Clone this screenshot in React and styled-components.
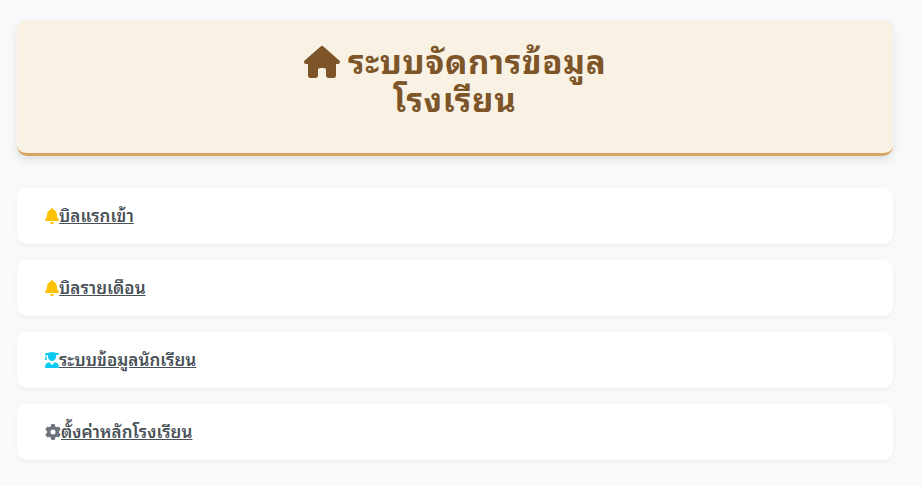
import React from 'react';
import styled, { createGlobalStyle } from 'styled-components';
import { FaHouse, FaBell, FaUserGraduate, FaGear } from 'react-icons/fa6';

const GlobalStyle = createGlobalStyle`
    * { box-sizing: border-box; }

    body {
        margin: 0;
        background-color: #f8f9fb;
        font-family: "Leelawadee UI", "Noto Sans Thai Looped", "Noto Looped Thai", "Loma", "Waree", "Garuda", "Liberation Sans", sans-serif;
    }
`;

const Page = styled.main`
    min-height: 486px;
    padding: 20px 29px 0 17px;
`;

const Header = styled.header`
    display: flex;
    justify-content: center;
    height: 136px;
    margin-bottom: 32px;
    padding-top: 21px;
    border-bottom: 3px solid #d6a562;
    border-radius: 10px;
    background-color: #f8f1e4;
    box-shadow: 0 4px 8px rgba(0, 0, 0, 0.1);
`;

const Title = styled.h1`
    margin: 0;
    color: #7d5528;
    font-size: 33px;
    font-weight: 700;
    letter-spacing: 0.7px;
    line-height: 38px;
    text-align: center;

    svg {
        width: 36px;
        height: 32px;
        margin-right: -1px;
        vertical-align: -4px;
    }
`;

const Menu = styled.nav`
    display: flex;
    flex-direction: column;
    gap: 16px;
`;

const MenuCard = styled.div`
    display: flex;
    align-items: center;
    height: 56px;
    padding: 0 28px;
    border-radius: 10px;
    background-color: white;
    box-shadow: 0 2px 5px rgba(0, 0, 0, 0.05);
    color: ${props => props.$color};

    svg {
        width: ${props => props.$iconWidth};
        height: 16px;
    }
`;

const MenuLink = styled.a`
    padding-bottom: 4px;
    color: #495057;
    font-size: 17px;
    font-weight: 600;
    letter-spacing: 0.05px;
    text-decoration: underline;
`;

const menus = [
    { label: 'บิลแรกเข้า', icon: FaBell, color: '#ffc107', iconWidth: '14px' },
    { label: 'บิลรายเดือน', icon: FaBell, color: '#ffc107', iconWidth: '14px' },
    { label: 'ระบบข้อมูลนักเรียน', icon: FaUserGraduate, color: '#0dcaf0', iconWidth: '14px' },
    { label: 'ตั้งค่าหลักโรงเรียน', icon: FaGear, color: '#6c757d', iconWidth: '16px' },
];

const App = () => {
    return (
        <>
            <GlobalStyle />
            <Page>
                <Header>
                    <Title>
                        <FaHouse /> ระบบจัดการข้อมูล<br />โรงเรียน
                    </Title>
                </Header>
                <Menu>
                    {menus.map(({ label, icon: Icon, color, iconWidth }) => (
                        <MenuCard key={label} $color={color} $iconWidth={iconWidth}>
                            <Icon />
                            <MenuLink href="#">{label}</MenuLink>
                        </MenuCard>
                    ))}
                </Menu>
            </Page>
        </>
    )
}

export default App
